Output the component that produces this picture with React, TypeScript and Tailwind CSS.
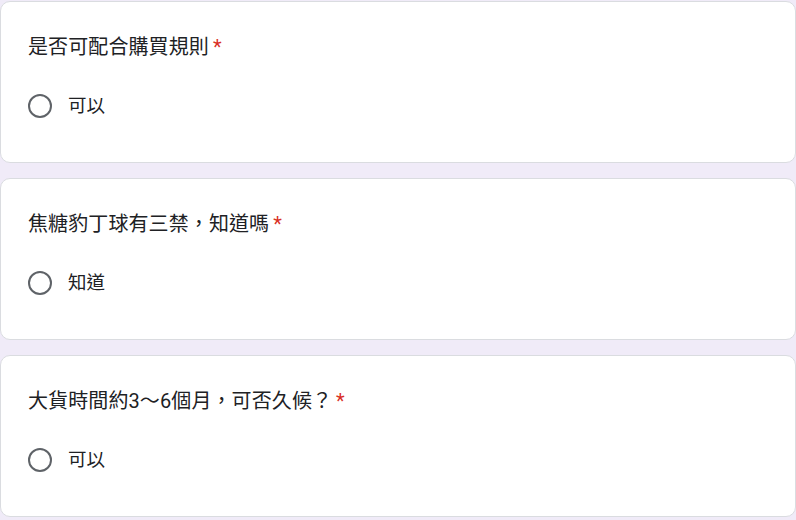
import React from 'react';

const QUESTIONS = [
  { title: '是否可配合購買規則', option: '可以' },
  { title: '焦糖豹丁球有三禁，知道嗎', option: '知道' },
  { title: '大貨時間約3～6個月，可否久候？', option: '可以' },
];

function Radio() {
  return <div className="w-[24px] h-[24px] rounded-full border-[2.5px] border-[#5f6368] shrink-0" />;
}

function QuestionCard({ title, option }: { title: string; option: string }) {
  return (
    <div className="h-[162px] shrink-0 bg-white border border-[#dadce0] rounded-[10px] pt-[30px] pl-[27px]">
      <div className="text-[20px] leading-[30px] text-[#202124] tracking-[0.1px]">
        {title}
        <span className="text-[#d93025] pl-[4px]">*</span>
      </div>
      <div className="mt-[32px] flex items-center">
        <Radio />
        <span className="ml-[16px] text-[18.5px] leading-[24px] text-[#202124]">{option}</span>
      </div>
    </div>
  );
}

export default function App() {
  return (
    <div
      className="w-[796px] h-[520px] overflow-hidden bg-[#f0ebf8] pt-[1px] flex flex-col gap-[15px]"
      style={{ fontFamily: 'Roboto, "Noto Sans CJK TC", sans-serif' }}
    >
      {QUESTIONS.map((q, i) => (
        <QuestionCard key={i} {...q} />
      ))}
    </div>
  );
}
